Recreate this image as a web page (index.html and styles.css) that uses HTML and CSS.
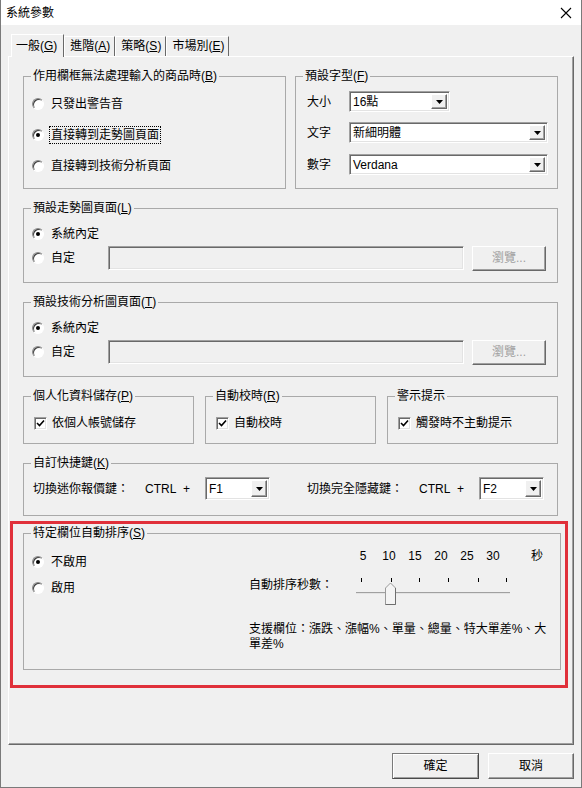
FILE: index.html
```html
<!DOCTYPE html>
<html lang="zh-Hant">
<head>
  <meta charset="UTF-8" />
  <title>系統參數</title>
  <link rel="stylesheet" href="styles.css">
</head>
<body>
  <div class="window">
    <div class="titlebar">
      <span class="title">系統參數</span>
      <svg class="close" width="12" height="12" viewBox="0 0 12 12"><path d="M1 1L11 11M11 1L1 11" stroke="#000" stroke-width="1.1"/></svg>
    </div>

    <div class="tabs">
      <div class="tab active">一般(<u>G</u>)</div>
      <div class="tab">進階(<u>A</u>)</div>
      <div class="tab">策略(<u>S</u>)</div>
      <div class="tab">市場別(<u>E</u>)</div>
    </div>

    <div class="panel">
      <div class="top-row">
        <fieldset class="g-action">
          <legend>作用欄框無法處理輸入的商品時(<u>B</u>)</legend>
          <div class="gb">
            <label class="opt tall"><span class="radio"></span><span>只發出警告音</span></label>
            <label class="opt tall"><span class="radio on"></span><span class="focus">直接轉到走勢圖頁面</span></label>
            <label class="opt tall"><span class="radio"></span><span>直接轉到技術分析頁面</span></label>
          </div>
        </fieldset>
        <fieldset class="g-font">
          <legend>預設字型(<u>F</u>)</legend>
          <div class="gb">
            <div class="font-row">
              <span class="font-label">大小</span>
              <div class="select short"><span class="val">16點</span><span class="drop"><svg width="7" height="4" viewBox="0 0 7 4"><path d="M0 0H7L3.5 4Z" fill="#000"/></svg></span></div>
            </div>
            <div class="font-row">
              <span class="font-label">文字</span>
              <div class="select long"><span class="val">新細明體</span><span class="drop"><svg width="7" height="4" viewBox="0 0 7 4"><path d="M0 0H7L3.5 4Z" fill="#000"/></svg></span></div>
            </div>
            <div class="font-row">
              <span class="font-label">數字</span>
              <div class="select long"><span class="val">Verdana</span><span class="drop"><svg width="7" height="4" viewBox="0 0 7 4"><path d="M0 0H7L3.5 4Z" fill="#000"/></svg></span></div>
            </div>
          </div>
        </fieldset>
      </div>

      <fieldset class="g-page">
        <legend>預設走勢圖頁面(<u>L</u>)</legend>
        <div class="gb">
          <label class="opt"><span class="radio on"></span><span>系統內定</span></label>
          <div class="custom-row">
            <label class="opt fixed"><span class="radio"></span><span>自定</span></label>
            <div class="path-input"></div>
            <div class="btn disabled browse">瀏覽...</div>
          </div>
        </div>
      </fieldset>

      <fieldset class="g-page">
        <legend>預設技術分析圖頁面(<u>T</u>)</legend>
        <div class="gb">
          <label class="opt"><span class="radio on"></span><span>系統內定</span></label>
          <div class="custom-row">
            <label class="opt fixed"><span class="radio"></span><span>自定</span></label>
            <div class="path-input"></div>
            <div class="btn disabled browse">瀏覽...</div>
          </div>
        </div>
      </fieldset>

      <div class="three-row">
        <fieldset class="g-small">
          <legend>個人化資料儲存(<u>P</u>)</legend>
          <div class="gb">
            <label class="opt"><span class="check"><svg width="9" height="9" viewBox="0 0 9 9"><path d="M1 4L3.5 6.5L8 1.5" fill="none" stroke="#000" stroke-width="1.6"/></svg></span><span>依個人帳號儲存</span></label>
          </div>
        </fieldset>
        <fieldset class="g-small">
          <legend>自動校時(<u>R</u>)</legend>
          <div class="gb">
            <label class="opt"><span class="check"><svg width="9" height="9" viewBox="0 0 9 9"><path d="M1 4L3.5 6.5L8 1.5" fill="none" stroke="#000" stroke-width="1.6"/></svg></span><span>自動校時</span></label>
          </div>
        </fieldset>
        <fieldset class="g-small">
          <legend>警示提示</legend>
          <div class="gb">
            <label class="opt"><span class="check"><svg width="9" height="9" viewBox="0 0 9 9"><path d="M1 4L3.5 6.5L8 1.5" fill="none" stroke="#000" stroke-width="1.6"/></svg></span><span>觸發時不主動提示</span></label>
          </div>
        </fieldset>
      </div>

      <fieldset class="g-keys">
        <legend>自訂快捷鍵(<u>K</u>)</legend>
        <div class="gb keys-row">
          <span class="key-label">切換迷你報價鍵：</span>
          <span class="ctrl">CTRL&nbsp; +</span>
          <div class="select key"><span class="val">F1</span><span class="drop"><svg width="7" height="4" viewBox="0 0 7 4"><path d="M0 0H7L3.5 4Z" fill="#000"/></svg></span></div>
          <span class="key-label second">切換完全隱藏鍵：</span>
          <span class="ctrl">CTRL&nbsp; +</span>
          <div class="select key"><span class="val">F2</span><span class="drop"><svg width="7" height="4" viewBox="0 0 7 4"><path d="M0 0H7L3.5 4Z" fill="#000"/></svg></span></div>
        </div>
      </fieldset>

      <fieldset class="g-sort">
        <legend>特定欄位自動排序(<u>S</u>)</legend>
        <div class="gb sort-body">
          <div class="sort-left">
            <label class="opt mid"><span class="radio on"></span><span>不啟用</span></label>
            <label class="opt mid"><span class="radio"></span><span>啟用</span></label>
          </div>
          <div class="sort-right">
            <div class="scale">
              <span>5</span><span>10</span><span>15</span><span>20</span><span>25</span><span>30</span>
              <span class="unit">秒</span>
            </div>
            <div class="slider-row">
              <span class="slider-label">自動排序秒數：</span>
              <svg class="slider" width="158" height="31" viewBox="0 0 158 31">
                <path d="M7.5 3V7M37.5 3V7M65.5 3V7M94.5 3V7M124.5 3V7M152.5 3V7" stroke="#000"/>
                <path d="M2 17.5H156" stroke="#a0a0a0"/>
                <path d="M2 18.5H156" stroke="#e3e3e3"/>
                <path d="M31.5 29.5V13L36.5 8L41.5 13V29.5Z" fill="#f4f4f4" stroke="#9a9a9a"/>
                <path d="M31.5 29.5H41.5V13" fill="none" stroke="#6e6e6e"/>
              </svg>
            </div>
            <p class="support">支援欄位：漲跌、漲幅%、單量、總量、特大單差%、大單差%</p>
          </div>
        </div>
      </fieldset>
    </div>

    <div class="buttons">
      <div class="btn default">確定</div>
      <div class="btn">取消</div>
    </div>

    <div class="highlight"></div>
  </div>
</body>
</html>
```

FILE: styles.css
```css
* {
  box-sizing: border-box;
}
body {
  margin: 0;
  font-family: "Liberation Sans", "Noto Sans CJK TC", sans-serif;
  font-size: 12px;
  line-height: 14px;
  color: #000;
}
u {
  text-decoration: underline;
  text-underline-offset: 1px;
}
.window {
  position: relative;
  width: 582px;
  height: 788px;
  background: #f0f0f0;
  border: 1px solid #7a7a7a;
  border-top: none;
}
.titlebar {
  height: 25px;
  background: #fff;
  display: flex;
  align-items: center;
  padding: 0 9px 0 5px;
}
.title {
  flex: 1;
}
.close {
  display: block;
}

/* tabs */
.tabs {
  height: 31px;
  display: flex;
  align-items: flex-end;
  padding-left: 10px;
  position: relative;
  z-index: 1;
}
.tab {
  height: 20px;
  padding: 2px 4px 0 5px;
  border-top: 1px solid #fff;
  border-left: 1px solid #fff;
  border-right: 1px solid #696969;
}
.tab.active {
  height: 23px;
  padding: 4px 6px 0 4px;
  margin-bottom: -1px;
  background: #f0f0f0;
}

/* panel */
.panel {
  height: 689px;
  margin: 0 7px;
  border-top: 1px solid #fff;
  border-left: 1px solid #fff;
  border-right: 1px solid #696969;
  border-bottom: 1px solid #696969;
  box-shadow: inset -1px -1px 0 #a0a0a0;
  padding: 12px 15px 0 14px;
  display: flex;
  flex-direction: column;
  gap: 12px;
}
fieldset {
  margin: 0;
  padding: 0;
  min-width: 0;
  border: 1px solid #a9a9a9;
}
legend {
  padding: 0 2px;
  margin-left: 7px;
  line-height: 14px;
}

/* generic controls */
.opt {
  display: flex;
  align-items: center;
  gap: 7px;
  height: 18px;
}
.opt.tall {
  height: 31px;
}
.opt.mid {
  height: 20px;
}
.radio {
  flex: none;
  width: 12px;
  height: 12px;
  border-radius: 50%;
  background: #fff;
  border: 1px solid;
  border-color: #8a8a8a #fff #fff #8a8a8a;
  box-shadow: inset 1px 1px 0 #404040;
  display: flex;
  align-items: center;
  justify-content: center;
}
.radio.on::after {
  content: "";
  width: 4px;
  height: 4px;
  border-radius: 50%;
  background: #000;
}
.check {
  flex: none;
  width: 13px;
  height: 13px;
  background: #fff;
  border: 1px solid;
  border-color: #a0a0a0 #fff #fff #a0a0a0;
  box-shadow: inset 1px 1px 0 #696969, inset -1px -1px 0 #e3e3e3;
  display: flex;
  align-items: center;
  justify-content: center;
  margin-right: -2px;
}
.check svg {
  display: block;
}
.focus {
  outline: 1px dotted #000;
  outline-offset: 1px;
}
.select {
  display: flex;
  align-items: center;
  height: 21px;
  background: #fff;
  border: 1px solid;
  border-color: #a0a0a0 #fff #fff #a0a0a0;
  box-shadow: inset 1px 1px 0 #696969, inset -1px -1px 0 #e3e3e3;
  padding: 2px;
}
.select .val {
  flex: 1;
  padding-left: 1px;
}
.drop {
  width: 16px;
  height: 100%;
  background: #f0f0f0;
  border: 1px solid;
  border-color: #fff #696969 #696969 #fff;
  box-shadow: inset -1px -1px 0 #a0a0a0;
  display: flex;
  align-items: center;
  justify-content: center;
}
.drop svg {
  display: block;
}
.btn {
  display: flex;
  align-items: center;
  justify-content: center;
  background: #f0f0f0;
  border: 1px solid;
  border-color: #fff #696969 #696969 #fff;
  box-shadow: inset -1px -1px 0 #a0a0a0;
}
.btn.disabled {
  color: #a0a0a0;
}

/* first row */
.top-row {
  display: flex;
  gap: 9px;
}
.g-action {
  width: 263px;
  height: 120px;
}
.g-action .gb {
  padding: 5px 0 0 8px;
}
.g-font {
  flex: 1;
  height: 120px;
}
.g-font .gb {
  padding: 8px 9px 0 11px;
}
.font-row {
  display: flex;
  align-items: center;
  margin-bottom: 10px;
}
.font-row + .font-row {
  margin-bottom: 11px;
}
.font-label {
  width: 42px;
}
.select.short {
  width: 101px;
}
.select.long {
  flex: 1;
}

/* default pages */
.g-page {
  height: 82px;
}
.g-page .gb {
  padding: 10px 10px 0 8px;
}
.custom-row {
  display: flex;
  align-items: center;
  height: 26px;
  margin-top: 2px;
}
.opt.fixed {
  width: 76px;
}
.path-input {
  width: 356px;
  height: 24px;
  border: 1px solid;
  border-color: #a0a0a0 #fff #fff #a0a0a0;
  box-shadow: inset 1px 1px 0 #696969, inset -1px -1px 0 #e3e3e3;
}
.browse {
  width: 74px;
  height: 25px;
  margin-left: 8px;
}

/* three small groups */
.three-row {
  display: flex;
  gap: 11px;
}
.g-small {
  flex: 1;
  height: 55px;
}
.g-small .gb {
  padding: 11px 0 0 10px;
}

/* shortcuts */
.g-keys {
  height: 60px;
}
.keys-row {
  display: flex;
  align-items: center;
  height: 30px;
  padding: 7px 0 0 9px;
}
.key-label {
  width: 112px;
}
.key-label.second {
  margin-left: 37px;
}
.ctrl {
  width: 60px;
}
.select.key {
  width: 65px;
  height: 23px;
}

/* auto sort */
.g-sort {
  height: 144px;
  margin-top: -2px;
  margin-right: -3px;
}
.sort-body {
  display: flex;
  padding: 9px 0 0 8px;
}
.sort-left {
  width: 217px;
  padding-top: 3px;
  display: flex;
  flex-direction: column;
  gap: 6px;
}
.sort-right {
  flex: 1;
}
.scale {
  display: flex;
  padding-left: 101px;
  height: 14px;
}
.scale span {
  width: 26px;
  text-align: center;
}
.scale .unit {
  width: 12px;
  margin-left: 25px;
}
.slider-row {
  display: flex;
  margin-top: 12px;
}
.slider-label {
  width: 105px;
  padding-top: 3px;
}
.slider {
  display: block;
}
.support {
  width: 302px;
  margin: 16px 0 0;
  line-height: 15px;
}

/* dialog buttons */
.buttons {
  display: flex;
  justify-content: flex-end;
  gap: 9px;
  margin: 8px 7px 0 0;
}
.buttons .btn {
  width: 86px;
  height: 26px;
}
.buttons .btn.default {
  width: 87px;
  border-color: #7a7a7a #4a4a4a #4a4a4a #7a7a7a;
  box-shadow: inset 1px 1px 0 #fff, inset -1px -1px 0 #a0a0a0;
}

/* annotation frame */
.highlight {
  position: absolute;
  left: 9px;
  top: 521px;
  width: 558px;
  height: 167px;
  border: 3px solid #e0303a;
  pointer-events: none;
}
```
